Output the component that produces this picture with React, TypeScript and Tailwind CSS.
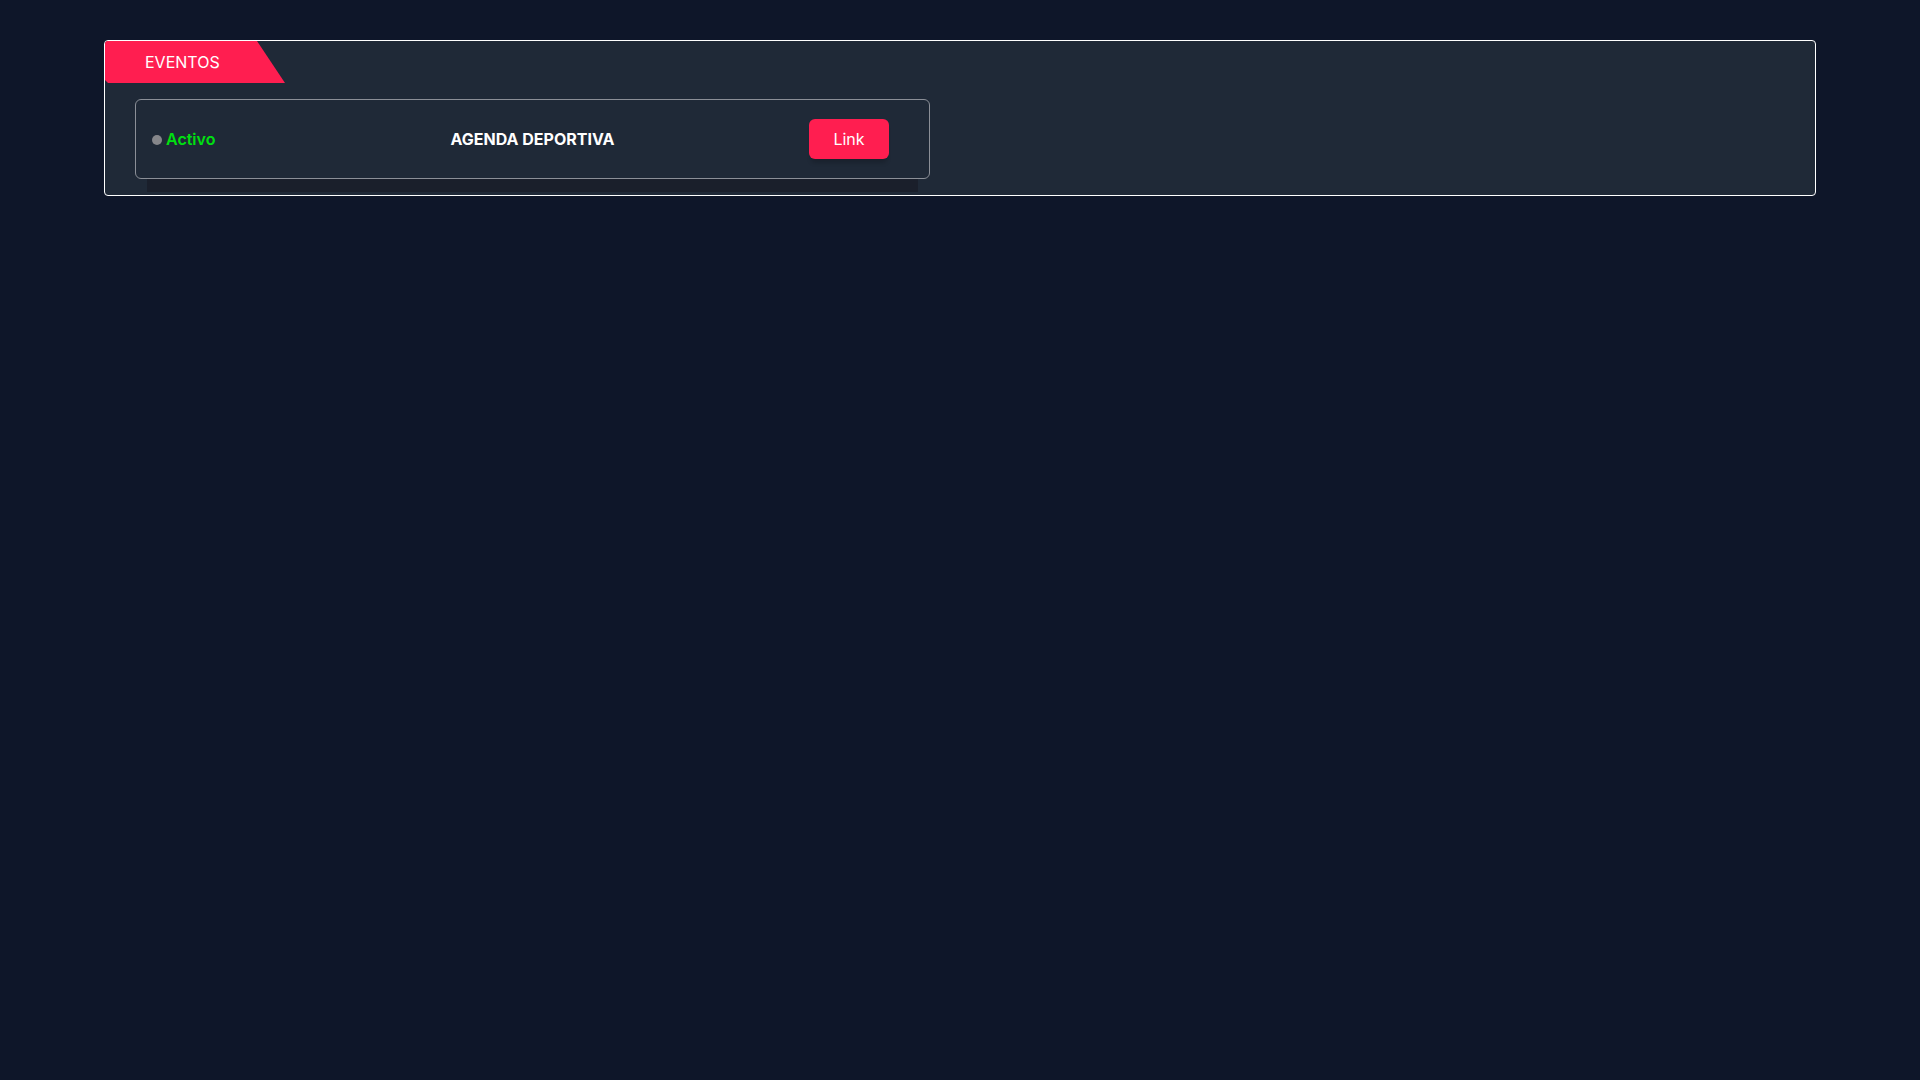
import React from 'react';

type Evento = {
  id: number;
  estado: string;
  titulo: string;
  url: string;
};

const eventos: Evento[] = [
  { id: 1, estado: 'Activo', titulo: 'AGENDA DEPORTIVA', url: '#' },
];

function EventoCard({ evento }: { evento: Evento }) {
  return (
    <div className="w-[795px]">
      <div className="h-[80px] border border-[#8b8f97] rounded-md bg-[#1f2937] grid grid-cols-[1fr_auto_1fr] items-center px-[16px]">
        {/* Estado */}
        <div className="flex items-center gap-[4px]">
          <span className="w-[10px] h-[10px] rounded-full bg-[#85868a] mt-[1px]" />
          <span className="text-[16px] font-semibold text-[#00e010]">{evento.estado}</span>
        </div>

        {/* Titulo */}
        <div className="text-[16px] font-bold text-white">{evento.titulo}</div>

        {/* Link */}
        <div className="flex justify-end pr-[24px]">
          <a
            href={evento.url}
            className="w-[80px] h-[40px] rounded-md bg-[#ff1e50] text-white text-[16px] flex items-center justify-center shadow-[0_6px_4px_-2px_rgba(0,0,0,0.18)]"
          >
            Link
          </a>
        </div>
      </div>
      <div className="mx-[12px] h-[13px] bg-[#1a1f2b]" />
    </div>
  );
}

export default function App() {
  return (
    <div
      className="min-h-screen bg-[#0e1629] pt-[40px] px-[104px]"
      style={{ fontFamily: 'Inter, "Noto Sans", sans-serif' }}
    >
      <div className="border border-white rounded bg-[#1f2937] overflow-hidden h-[156px]">
        {/* Tab header */}
        <div
          className="w-[180px] h-[42px] bg-[#ff1e50] flex items-center pl-[40px] text-white text-[16px]"
          style={{ clipPath: 'polygon(0 0, 152px 0, 180px 100%, 3px 100%, 0 calc(100% - 3px))' }}
        >
          EVENTOS
        </div>

        <div className="pt-[16px] pl-[30px]">
          {eventos.map((ev) => (
            <EventoCard key={ev.id} evento={ev} />
          ))}
        </div>
      </div>
    </div>
  );
}
